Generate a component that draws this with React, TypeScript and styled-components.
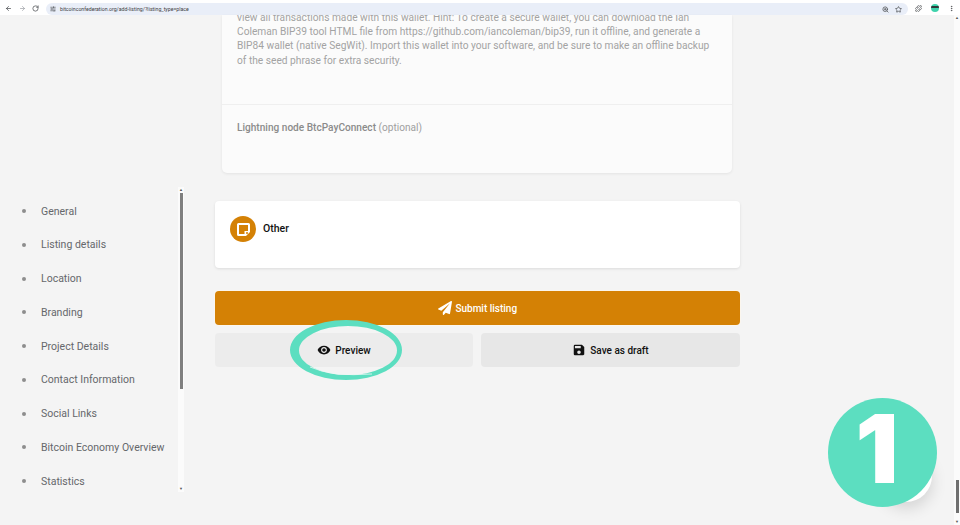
import * as React from 'react';
import styled, { createGlobalStyle } from 'styled-components';
import { ArrowLeft, ArrowRight, RotateCw, SlidersHorizontal, ZoomIn, Star, Puzzle, MoreVertical } from 'lucide-react';
import { FaPaperPlane } from 'react-icons/fa';
import { MdRemoveRedEye, MdSave } from 'react-icons/md';

const GlobalStyle = createGlobalStyle`
  html, body {
    margin: 0;
    padding: 0;
    background: #f4f4f4;
    overflow: hidden;
  }
  * {
    box-sizing: border-box;
  }
`;

const Page = styled.div`
  position: relative;
  width: 960px;
  height: 525px;
  overflow: hidden;
  display: flex;
  flex-direction: column;
  font-family: Roboto, 'Liberation Sans', sans-serif;
  background: #f4f4f4;
`;

const BrowserBar = styled.div`
  height: 15px;
  flex: none;
  display: flex;
  align-items: center;
  padding: 1px 4px 0 5px;
  background: #fff;
  color: #4a4d52;
`;

const NavIcons = styled.div`
  display: flex;
  align-items: center;
  gap: 6.5px;
  width: 41px;
  flex: none;
`;

const UrlBar = styled.div`
  width: 862px;
  height: 12px;
  margin-top: 2px;
  flex: none;
  border-radius: 6px;
  background: #e9eef8;
  display: flex;
  align-items: center;
  padding: 0 6px 0 4px;
  gap: 4px;
`;

const Url = styled.span`
  flex: 1;
  font-size: 5.2px;
  color: #3e4043;
  white-space: nowrap;
`;

const StarWrap = styled.span`
  display: flex;
  margin-left: 2px;
`;

const BarRight = styled.div`
  flex: 1;
  display: flex;
  align-items: center;
  gap: 9px;
  padding-left: 7px;
`;

const Avatar = styled.span`
  width: 8px;
  height: 8px;
  flex: none;
  border-radius: 50%;
  background: linear-gradient(180deg, #3fd3ac 25%, #2c3a3a 25%, #2c3a3a 50%, #3fd3ac 50%);
`;

const Content = styled.div`
  flex: 1;
  min-height: 0;
  display: flex;
`;

const SideColumn = styled.aside`
  width: 184px;
  flex: none;
  padding-top: 172px;
`;

const SideNav = styled.div`
  height: 305px;
  display: flex;
  justify-content: space-between;
`;

const NavList = styled.ul`
  margin: 0;
  padding: 17px 0 0 22px;
  list-style: none;
  display: flex;
  flex-direction: column;
  gap: 19.75px;
`;

const NavItem = styled.li`
  display: flex;
  align-items: center;
  gap: 15px;
  height: 14px;
  font-size: 10.5px;
  color: #65676b;
  white-space: nowrap;

  &::before {
    content: '';
    width: 4px;
    height: 4px;
    flex: none;
    border-radius: 50%;
    background: #8d8d8d;
  }
`;

const NavScroll = styled.div`
  width: 6px;
  flex: none;
  background: #fbfbfb;
  display: flex;
  flex-direction: column;
  align-items: center;
  color: #555;
  font-size: 4px;
  line-height: 6px;
`;

const NavThumb = styled.div`
  width: 3px;
  height: 196px;
  background: #7f7f7f;
  margin-bottom: auto;
`;

const Main = styled.main`
  width: 556px;
  margin-left: 31px;
  flex: none;
  display: flex;
  flex-direction: column;
  align-items: stretch;
`;

const FadedCard = styled.section`
  width: 510px;
  height: 158px;
  margin-left: 7px;
  flex: none;
  overflow: hidden;
  background: #fbfbfb;
  border-radius: 0 0 5px 5px;
  box-shadow: 0 1px 3px rgba(0, 0, 0, 0.07);
`;

const FadedText = styled.p`
  height: 93.5px;
  margin: -4.5px 0 0;
  padding: 0 15px;
  font-size: 10.2px;
  line-height: 14.4px;
  color: #a3a3a3;
  border-bottom: 1px solid #efefef;
  box-sizing: content-box;
`;

const FadedLabel = styled.div`
  padding: 15.5px 15px 0;
  font-size: 10.1px;
  line-height: 14px;
  font-weight: 500;
  color: #8b8b8b;

  small {
    font-size: 10.1px;
    font-weight: 400;
    color: #a0a0a0;
  }
`;

const Column = styled.div`
  width: 525px;
  margin-top: 28px;
  display: flex;
  flex-direction: column;
`;

const OtherCard = styled.section`
  height: 67px;
  background: #fff;
  border-radius: 4px;
  box-shadow: 0 1px 3px rgba(0, 0, 0, 0.1);
  padding: 15px 15px 0;
  display: flex;
  align-items: flex-start;
  gap: 7px;
`;

const IconCircle = styled.span`
  width: 26px;
  height: 26px;
  flex: none;
  border-radius: 50%;
  background: #d48105;
  display: flex;
  align-items: center;
  justify-content: center;
`;

const OtherTitle = styled.h3`
  margin: 0;
  font-size: 10.5px;
  line-height: 26px;
  font-weight: 500;
  color: #111;
`;

const SubmitButton = styled.button`
  height: 34px;
  margin-top: 23px;
  padding: 0;
  border: 0;
  border-radius: 4px;
  background: #d48105;
  box-shadow: 0 0 0 1px #fbf6ee;
  color: #fff;
  font: 500 10px Roboto, sans-serif;
  display: flex;
  align-items: center;
  justify-content: center;
  gap: 3.5px;
`;

const ButtonRow = styled.div`
  margin-top: 8px;
  display: grid;
  grid-template-columns: 258px 259px;
  gap: 8px;
`;

const GreyButton = styled.button<{ $shade: string }>`
  height: 34px;
  padding: 0;
  border: 0;
  border-radius: 4px;
  background: ${(p) => p.$shade};
  color: #111;
  font: 500 10px Roboto, sans-serif;
  display: flex;
  align-items: center;
  justify-content: center;
  gap: 4px;
`;

const PageScroll = styled.div`
  width: 6px;
  margin-left: auto;
  flex: none;
  background: #fbfbfb;
  display: flex;
  flex-direction: column;
  align-items: center;
  justify-content: flex-end;
  font-size: 4px;
  line-height: 6px;
  color: #555;
`;

const PageThumb = styled.div`
  width: 3px;
  height: 33px;
  background: #6f6f6f;
  margin-bottom: 6px;
`;

const ScrollTop = styled.span`
  margin-bottom: auto;
`;

const Ring = styled.svg`
  position: absolute;
  left: 288px;
  top: 318px;
`;

const ChatBubble = styled.div`
  position: absolute;
  left: 880px;
  top: 450px;
  width: 52px;
  height: 52px;
  border-radius: 50%;
  background: #fff;
  box-shadow: 0 6px 16px rgba(0, 0, 0, 0.14);
`;

const StepBadge = styled.div`
  position: absolute;
  left: 828px;
  top: 397.5px;
  width: 109px;
  height: 109px;
  padding-right: 11px;
  border-radius: 50%;
  background: #5cdec0;
  color: #fff;
  font-family: Inter, Roboto, sans-serif;
  font-size: 95px;
  font-weight: 900;
  line-height: 101px;
  text-align: center;
`;

const navItems = [
  'General',
  'Listing details',
  'Location',
  'Branding',
  'Project Details',
  'Contact Information',
  'Social Links',
  'Bitcoin Economy Overview',
  'Statistics',
];

function NoteIcon() {
  return (
    <svg width="15" height="15" viewBox="0 0 15 15" fill="none">
      <path
        d="M2.5 1h10a1.5 1.5 0 0 1 1.5 1.5v7.5l-4 4h-7.5a1.5 1.5 0 0 1-1.5-1.5v-10a1.5 1.5 0 0 1 1.5-1.5z"
        fill="#fff"
      />
      <rect x="3" y="3" width="9" height="6" fill="#d48105" />
      <rect x="3" y="9" width="5.5" height="3" fill="#d48105" />
      <circle cx="11" cy="11" r="1" fill="#d48105" />
    </svg>
  );
}

export default function App() {
  return (
    <Page>
      <GlobalStyle />
      <BrowserBar>
        <NavIcons>
          <ArrowLeft size={7} strokeWidth={2.5} />
          <ArrowRight size={7} strokeWidth={2.5} color="#a0a3a8" />
          <RotateCw size={7} strokeWidth={2.5} />
        </NavIcons>
        <UrlBar>
          <SlidersHorizontal size={6} strokeWidth={2.5} />
          <Url>bitcoinconfederation.org/add-listing/?listing_type=place</Url>
          <ZoomIn size={7} strokeWidth={2.5} />
          <StarWrap>
            <Star size={7} strokeWidth={2.5} />
          </StarWrap>
        </UrlBar>
        <BarRight>
          <Puzzle size={7} strokeWidth={2.5} />
          <Avatar />
          <MoreVertical size={7} strokeWidth={2.5} />
        </BarRight>
      </BrowserBar>
      <Content>
        <SideColumn>
          <SideNav>
            <NavList>
              {navItems.map((item) => (
                <NavItem key={item}>{item}</NavItem>
              ))}
            </NavList>
            <NavScroll>
              ▲
              <NavThumb />
              ▼
            </NavScroll>
          </SideNav>
        </SideColumn>
        <Main>
          <FadedCard>
            <FadedText>
              view all transactions made with this wallet. Hint: To create a secure wallet, you can download the Ian
              Coleman BIP39 tool HTML file from https://github.com/iancoleman/bip39, run it offline, and generate a
              BIP84 wallet (native SegWit). Import this wallet into your software, and be sure to make an offline backup
              of the seed phrase for extra security.
            </FadedText>
            <FadedLabel>
              Lightning node BtcPayConnect <small>(optional)</small>
            </FadedLabel>
          </FadedCard>
          <Column>
            <OtherCard>
              <IconCircle>
                <NoteIcon />
              </IconCircle>
              <OtherTitle>Other</OtherTitle>
            </OtherCard>
            <SubmitButton>
              <FaPaperPlane size={14} />
              Submit listing
            </SubmitButton>
            <ButtonRow>
              <GreyButton $shade="#ececec">
                <MdRemoveRedEye size={14} />
                Preview
              </GreyButton>
              <GreyButton $shade="#e7e7e7">
                <MdSave size={14} />
                Save as draft
              </GreyButton>
            </ButtonRow>
          </Column>
        </Main>
        <PageScroll>
          <ScrollTop>▲</ScrollTop>
          <PageThumb />
          ▼
        </PageScroll>
      </Content>
      <Ring width="116" height="64" viewBox="0 0 116 64" fill="none">
        <path
          fillRule="evenodd"
          fill="#5cdec0"
          d="M2 32a56 30 0 1 0 112 0a56 30 0 1 0-112 0zM11 32.5a49 24.5 0 1 0 98 0a49 24.5 0 1 0-98 0z"
        />
        <path d="M22 49Q44 59 84 56" stroke="#eef8f5" strokeWidth="0.8" />
      </Ring>
      <ChatBubble />
      <StepBadge>1</StepBadge>
    </Page>
  );
}
